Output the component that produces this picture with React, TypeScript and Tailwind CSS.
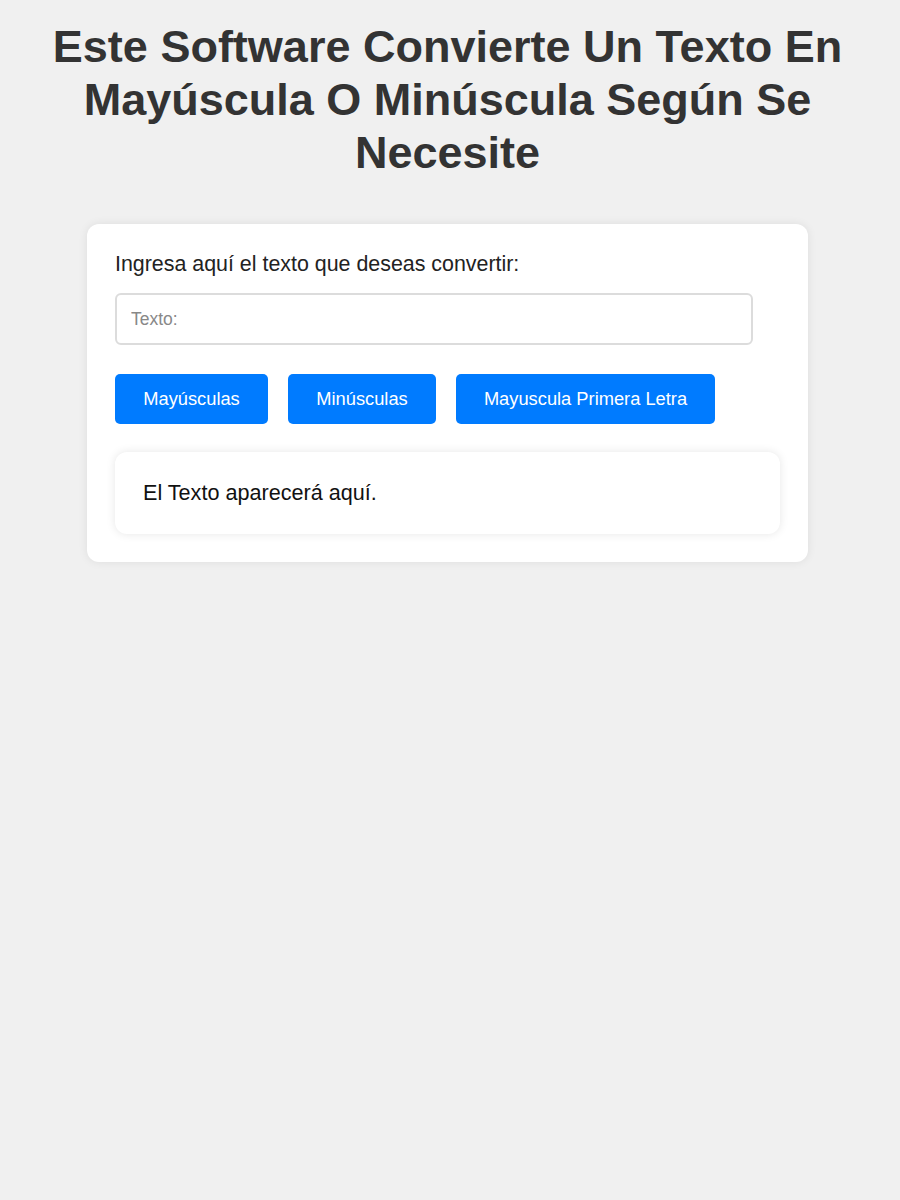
export default function App() {
  return (
    <div className="min-h-[1200px] bg-[#f0f0f0] pl-5 pr-[25px] pt-5 font-['Liberation_Sans',Arial,sans-serif]">
      <h1 className="mx-auto text-center text-[45px] font-bold leading-[53px] text-[#333]">
        Este Software Convierte Un Texto En Mayúscula O Minúscula Según Se Necesite
      </h1>
      <div className="mx-auto mt-[45px] w-[721px] rounded-xl bg-white p-7 shadow-[0_0_10px_rgba(0,0,0,0.08)]">
        <label className="block text-[21.4px] leading-[25px] text-[#222]">
          Ingresa aquí el texto que deseas convertir:
        </label>
        <input
          type="text"
          placeholder="Texto:"
          className="mt-4 h-[52px] w-[638px] rounded-md border-2 border-[#dcdcdc] px-[14px] text-[17.5px] text-[#333] placeholder:text-[#888] focus:outline-none"
        />
        <div className="mt-[29px] flex gap-5">
          <button className="h-[50px] w-[153px] rounded-[5px] bg-[#007bff] text-[18.3px] text-white">Mayúsculas</button>
          <button className="h-[50px] w-[148px] rounded-[5px] bg-[#007bff] text-[18.3px] text-white">Minúsculas</button>
          <button className="h-[50px] w-[259px] rounded-[5px] bg-[#007bff] text-[18.3px] text-white">Mayuscula Primera Letra</button>
        </div>
        <div className="mt-7 rounded-xl bg-white px-7 py-7 text-[21.6px] leading-[26px] text-[#111] shadow-[0_0_10px_rgba(0,0,0,0.1)]">
          El Texto aparecerá aquí.
        </div>
      </div>
    </div>
  );
}
